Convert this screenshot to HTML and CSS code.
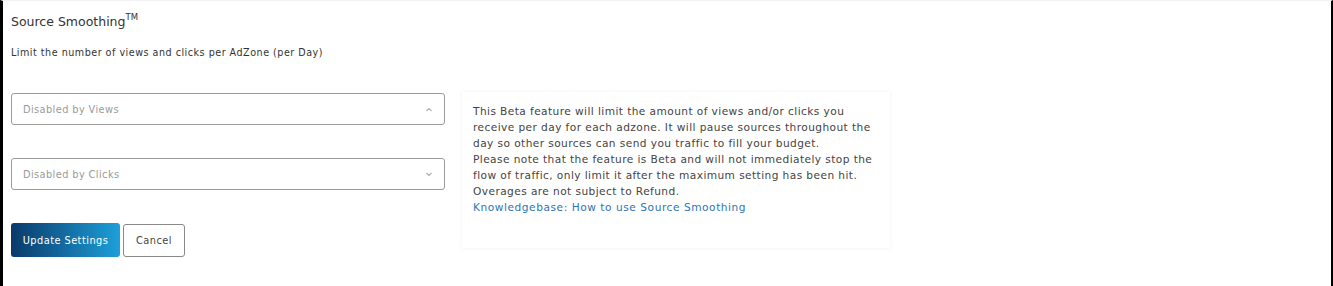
FILE: index.html
```html
<!DOCTYPE html>
<html>
<head>
    <title>Source Smoothing</title>
    <link rel="stylesheet" href="styles.css">
</head>
<body>
    <div class="page">
        <h3 class="title">Source Smoothing<sup>TM</sup></h3>
        <p class="subtitle">Limit the number of views and clicks per AdZone (per Day)</p>

        <div class="settings-row">
            <div class="form-col">
                <div class="select-box">
                    <span>Disabled by Views</span>
                    <svg class="caret" width="8" height="5" viewBox="0 0 8 5"><path d="M1.5 4 L4 1.5 L6.5 4" fill="none" stroke="#aaa" stroke-width="1.1"/></svg>
                </div>
                <div class="select-box">
                    <span>Disabled by Clicks</span>
                    <svg class="caret" width="8" height="5" viewBox="0 0 8 5"><path d="M1.5 1 L4 3.5 L6.5 1" fill="none" stroke="#aaa" stroke-width="1.1"/></svg>
                </div>
                <div class="actions">
                    <button class="btn-primary">Update Settings</button>
                    <button class="btn-cancel">Cancel</button>
                </div>
            </div>

            <div class="info-box">
                This Beta feature will limit the amount of views and/or clicks you receive per day for each adzone. It will pause sources throughout the day so other sources can send you traffic to fill your budget.<br>
                Please note that the feature is Beta and will not immediately stop the flow of traffic, only limit it after the maximum setting has been hit. Overages are not subject to Refund.<br>
                <a href="#">Knowledgebase: How to use Source Smoothing</a>
            </div>
        </div>
    </div>
</body>
</html>
```

FILE: styles.css
```css
html, body {
    margin: 0;
    padding: 0;
    background: #fff;
}
.page {
    box-sizing: border-box;
    height: 286px;
    border-left: 3px solid #000;
    border-right: 2px solid #000;
    border-top: 1px solid #f2f2f2;
    padding: 12px 8px 0 8px;
    font-family: "DejaVu Sans", Arial, sans-serif;
    color: #3a3a3a;
}
.title {
    margin: 0;
    font-size: 12.5px;
    font-weight: normal;
    color: #333;
    line-height: 18px;
}
.title sup {
    font-size: 8.5px;
    vertical-align: 6px;
    line-height: 0;
}
.subtitle {
    margin: 15px 0 0 0;
    font-size: 9.6px;
    letter-spacing: 0.5px;
    line-height: 14px;
    color: #333;
}
.settings-row {
    display: flex;
    align-items: flex-start;
    margin-top: 33px;
}
.form-col {
    width: 434px;
}
.select-box {
    box-sizing: border-box;
    height: 32px;
    border: 1px solid #9a9a9a;
    border-radius: 3px;
    display: flex;
    align-items: center;
    justify-content: space-between;
    padding: 0 11px 0 11px;
    font-size: 9.8px;
    letter-spacing: 0.4px;
    color: #9a9a9a;
    margin-bottom: 33px;
}
.caret {
    display: block;
}
.actions {
    display: flex;
    align-items: center;
    gap: 3px;
}
button {
    font-family: "DejaVu Sans", Arial, sans-serif;
    font-size: 9.8px;
    letter-spacing: 0.45px;
    cursor: pointer;
    border-radius: 3px;
}
.btn-primary {
    height: 34px;
    width: 109px;
    padding: 0;
    border: none;
    color: #fff;
    background: linear-gradient(to right, #0a3a6a, #1d9fd9);
}
.btn-cancel {
    height: 33px;
    width: 62px;
    padding: 0;
    border: 1px solid #888;
    background: #fff;
    color: #444;
}
.info-box {
    box-sizing: border-box;
    width: 428px;
    margin-left: 17px;
    margin-top: -1px;
    padding: 11px 11px 33px 11px;
    background: #fff;
    box-shadow: 0 0 4px rgba(0, 0, 0, 0.06);
    font-size: 10.6px;
    letter-spacing: 0.42px;
    line-height: 16px;
    color: #444;
}
.info-box a {
    color: #2f74b5;
    letter-spacing: 0.55px;
    text-decoration: none;
}
```
